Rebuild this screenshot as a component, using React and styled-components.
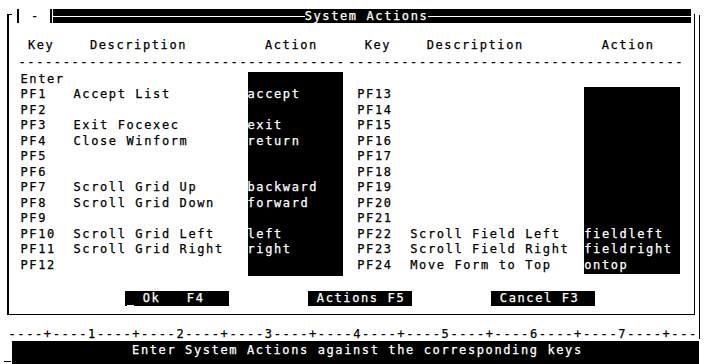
import React from "react";
import styled, { createGlobalStyle } from "styled-components";

const GlobalStyle = createGlobalStyle`
  html, body {
    margin: 0;
    background: #fff;
  }
  body {
    font-family: "DejaVu Sans Mono", "Liberation Mono", monospace;
    font-size: 12px;
    letter-spacing: 1.613px;
    color: #000;
    -webkit-text-stroke: 0.25px currentColor;
  }
`;

const Screen = styled.div`
  width: 707px;
  height: 364px;
  overflow: hidden;
  display: flex;
  flex-direction: column;
  white-space: pre;
  line-height: 15.5px;
`;

// window frame: double line on the right, corner stub top-left
const Window = styled.div`
  position: relative;
  box-sizing: border-box;
  width: 688px;
  height: 301px;
  margin: 14px 0 0 7px;
  border-left: 2px solid #000;
  border-right: 1px solid #000;
  border-bottom: 1px solid #000;
  display: flex;
  flex-direction: column;

  &::before {
    content: "";
    position: absolute;
    left: -2px;
    top: 0;
    width: 5px;
    height: 1px;
    background: #000;
  }
  &::after {
    content: "";
    position: absolute;
    right: -6px;
    top: 1px;
    width: 1px;
    height: 324px;
    background: #000;
  }
`;

const TitleRow = styled.div`
  display: flex;
  height: 14px;
  margin-top: -5px;
  padding: 0 3px 0 8px;
`;

const SysMenu = styled.div`
  box-sizing: border-box;
  width: 35px;
  border-left: 2px solid #000;
  border-right: 2px solid #000;
  display: flex;
  align-items: center;
  justify-content: center;
  line-height: 14px;
  letter-spacing: 0;
`;

const TitleBar = styled.div`
  flex: 1;
  margin-left: 1px;
  background: #000;
  color: #fff;
  display: flex;
  align-items: center;
  line-height: 14px;
`;

const TitleRule = styled.div`
  flex: ${(p) => p.$grow} 1 0;
  height: 1px;
  background: #fff;
`;

const Panels = styled.div`
  display: flex;
  margin-top: 14.5px;
  padding-left: 11.5px;
`;

const Panel = styled.div`
  width: ${(p) => p.$width}px;
  display: flex;
  flex-direction: column;
`;

const HeaderRow = styled.div`
  display: grid;
  grid-template-columns: 62px 175px 1fr;
  padding-left: 7.4px;
  height: 15.5px;
`;

const DashRow = styled.div`
  height: 15.5px;
  margin-top: 2.3px;
  margin-left: ${(p) => p.$shift}px;
`;

const Table = styled.div`
  display: grid;
  grid-template-columns: 53px 174px 95.5px;
  grid-auto-rows: 15.5px;
  margin-top: 0.9px;
`;

const Field = styled.div`
  grid-column: 3;
  grid-row: ${(p) => p.$row};
  align-self: start;
  height: ${(p) => p.$height}px;
  background: #000;
`;

const Cell = styled.div`
  grid-column: ${(p) => p.$col};
  grid-row: ${(p) => p.$row};
  color: ${(p) => (p.$col === 3 ? "#fff" : "#000")};
`;

const ButtonRow = styled.div`
  display: flex;
  gap: 79px;
  margin-top: 17.5px;
  padding-left: 116px;
`;

const Button = styled.div`
  position: relative;
  width: 104px;
  height: 15px;
  line-height: 15px;
  background: #000;
  color: #fff;
`;

const Cursor = styled.span`
  position: absolute;
  left: 2px;
  bottom: 0;
  width: 7px;
  height: 1px;
  background: #fff;
`;

const Ruler = styled.div`
  height: 14.15px;
  margin-top: 11.85px;
  padding-left: 8.5px;
`;

const StatusBar = styled.div`
  position: relative;
  box-sizing: border-box;
  width: 687.3px;
  height: 23px;
  margin-left: 11.7px;
  padding: 2.3px 0 0 120.4px;
  background: #000;
  color: #fff;

  &::before {
    content: "";
    position: absolute;
    left: -8px;
    bottom: 2px;
    width: 7px;
    height: 1px;
    background: #000;
  }
`;

const leftRows = [
  ["Enter", "", ""],
  ["PF1", "Accept List", "accept"],
  ["PF2", "", ""],
  ["PF3", "Exit Focexec", "exit"],
  ["PF4", "Close Winform", "return"],
  ["PF5", "", ""],
  ["PF6", "", ""],
  ["PF7", "Scroll Grid Up", "backward"],
  ["PF8", "Scroll Grid Down", "forward"],
  ["PF9", "", ""],
  ["PF10", "Scroll Grid Left", "left"],
  ["PF11", "Scroll Grid Right", "right"],
  ["PF12", "", ""],
];

const rightRows = [
  ["", "", ""],
  ["PF13", "", ""],
  ["PF14", "", ""],
  ["PF15", "", ""],
  ["PF16", "", ""],
  ["PF17", "", ""],
  ["PF18", "", ""],
  ["PF19", "", ""],
  ["PF20", "", ""],
  ["PF21", "", ""],
  ["PF22", "Scroll Field Left", "fieldleft"],
  ["PF23", "Scroll Field Right", "fieldright"],
  ["PF24", "Move Form to Top", "ontop"],
];

const ruler =
  [1, 2, 3, 4, 5, 6, 7].map((n) => "----+----" + n).join("") + "----+---";

function KeyPanel({ width, rows, fieldRow, fieldHeight, dashes, dashShift }) {
  return (
    <Panel $width={width}>
      <HeaderRow>
        <span>Key</span>
        <span>Description</span>
        <span>Action</span>
      </HeaderRow>
      <DashRow $shift={dashShift}>{"-".repeat(dashes)}</DashRow>
      <Table>
        <Field $row={fieldRow} $height={fieldHeight} />
        {rows.map(([key, desc, action], i) => (
          <React.Fragment key={i}>
            <Cell $col={1} $row={i + 1}>{key}</Cell>
            <Cell $col={2} $row={i + 1}>{desc}</Cell>
            <Cell $col={3} $row={i + 1}>{action}</Cell>
          </React.Fragment>
        ))}
      </Table>
    </Panel>
  );
}

function App() {
  return (
    <Screen>
      <GlobalStyle />
      <Window>
        <TitleRow>
          <SysMenu>-</SysMenu>
          <TitleBar>
            <TitleRule $grow={251} />
            <span>System Actions</span>
            <TitleRule $grow={262} />
          </TitleBar>
        </TitleRow>
        <Panels>
          <KeyPanel
            width={338.5}
            rows={leftRows}
            fieldRow={1}
            fieldHeight={204}
            dashes={37}
            dashShift={-2}
          />
          <KeyPanel
            width={338.5}
            rows={rightRows}
            fieldRow={2}
            fieldHeight={187}
            dashes={38}
            dashShift={-9}
          />
        </Panels>
        <ButtonRow>
          <Button>
            {"  Ok   F4"}
            <Cursor />
          </Button>
          <Button>{" Actions F5"}</Button>
          <Button>{" Cancel F3"}</Button>
        </ButtonRow>
      </Window>
      <Ruler>{ruler}</Ruler>
      <StatusBar>Enter System Actions against the corresponding keys</StatusBar>
    </Screen>
  );
}

export default App;
